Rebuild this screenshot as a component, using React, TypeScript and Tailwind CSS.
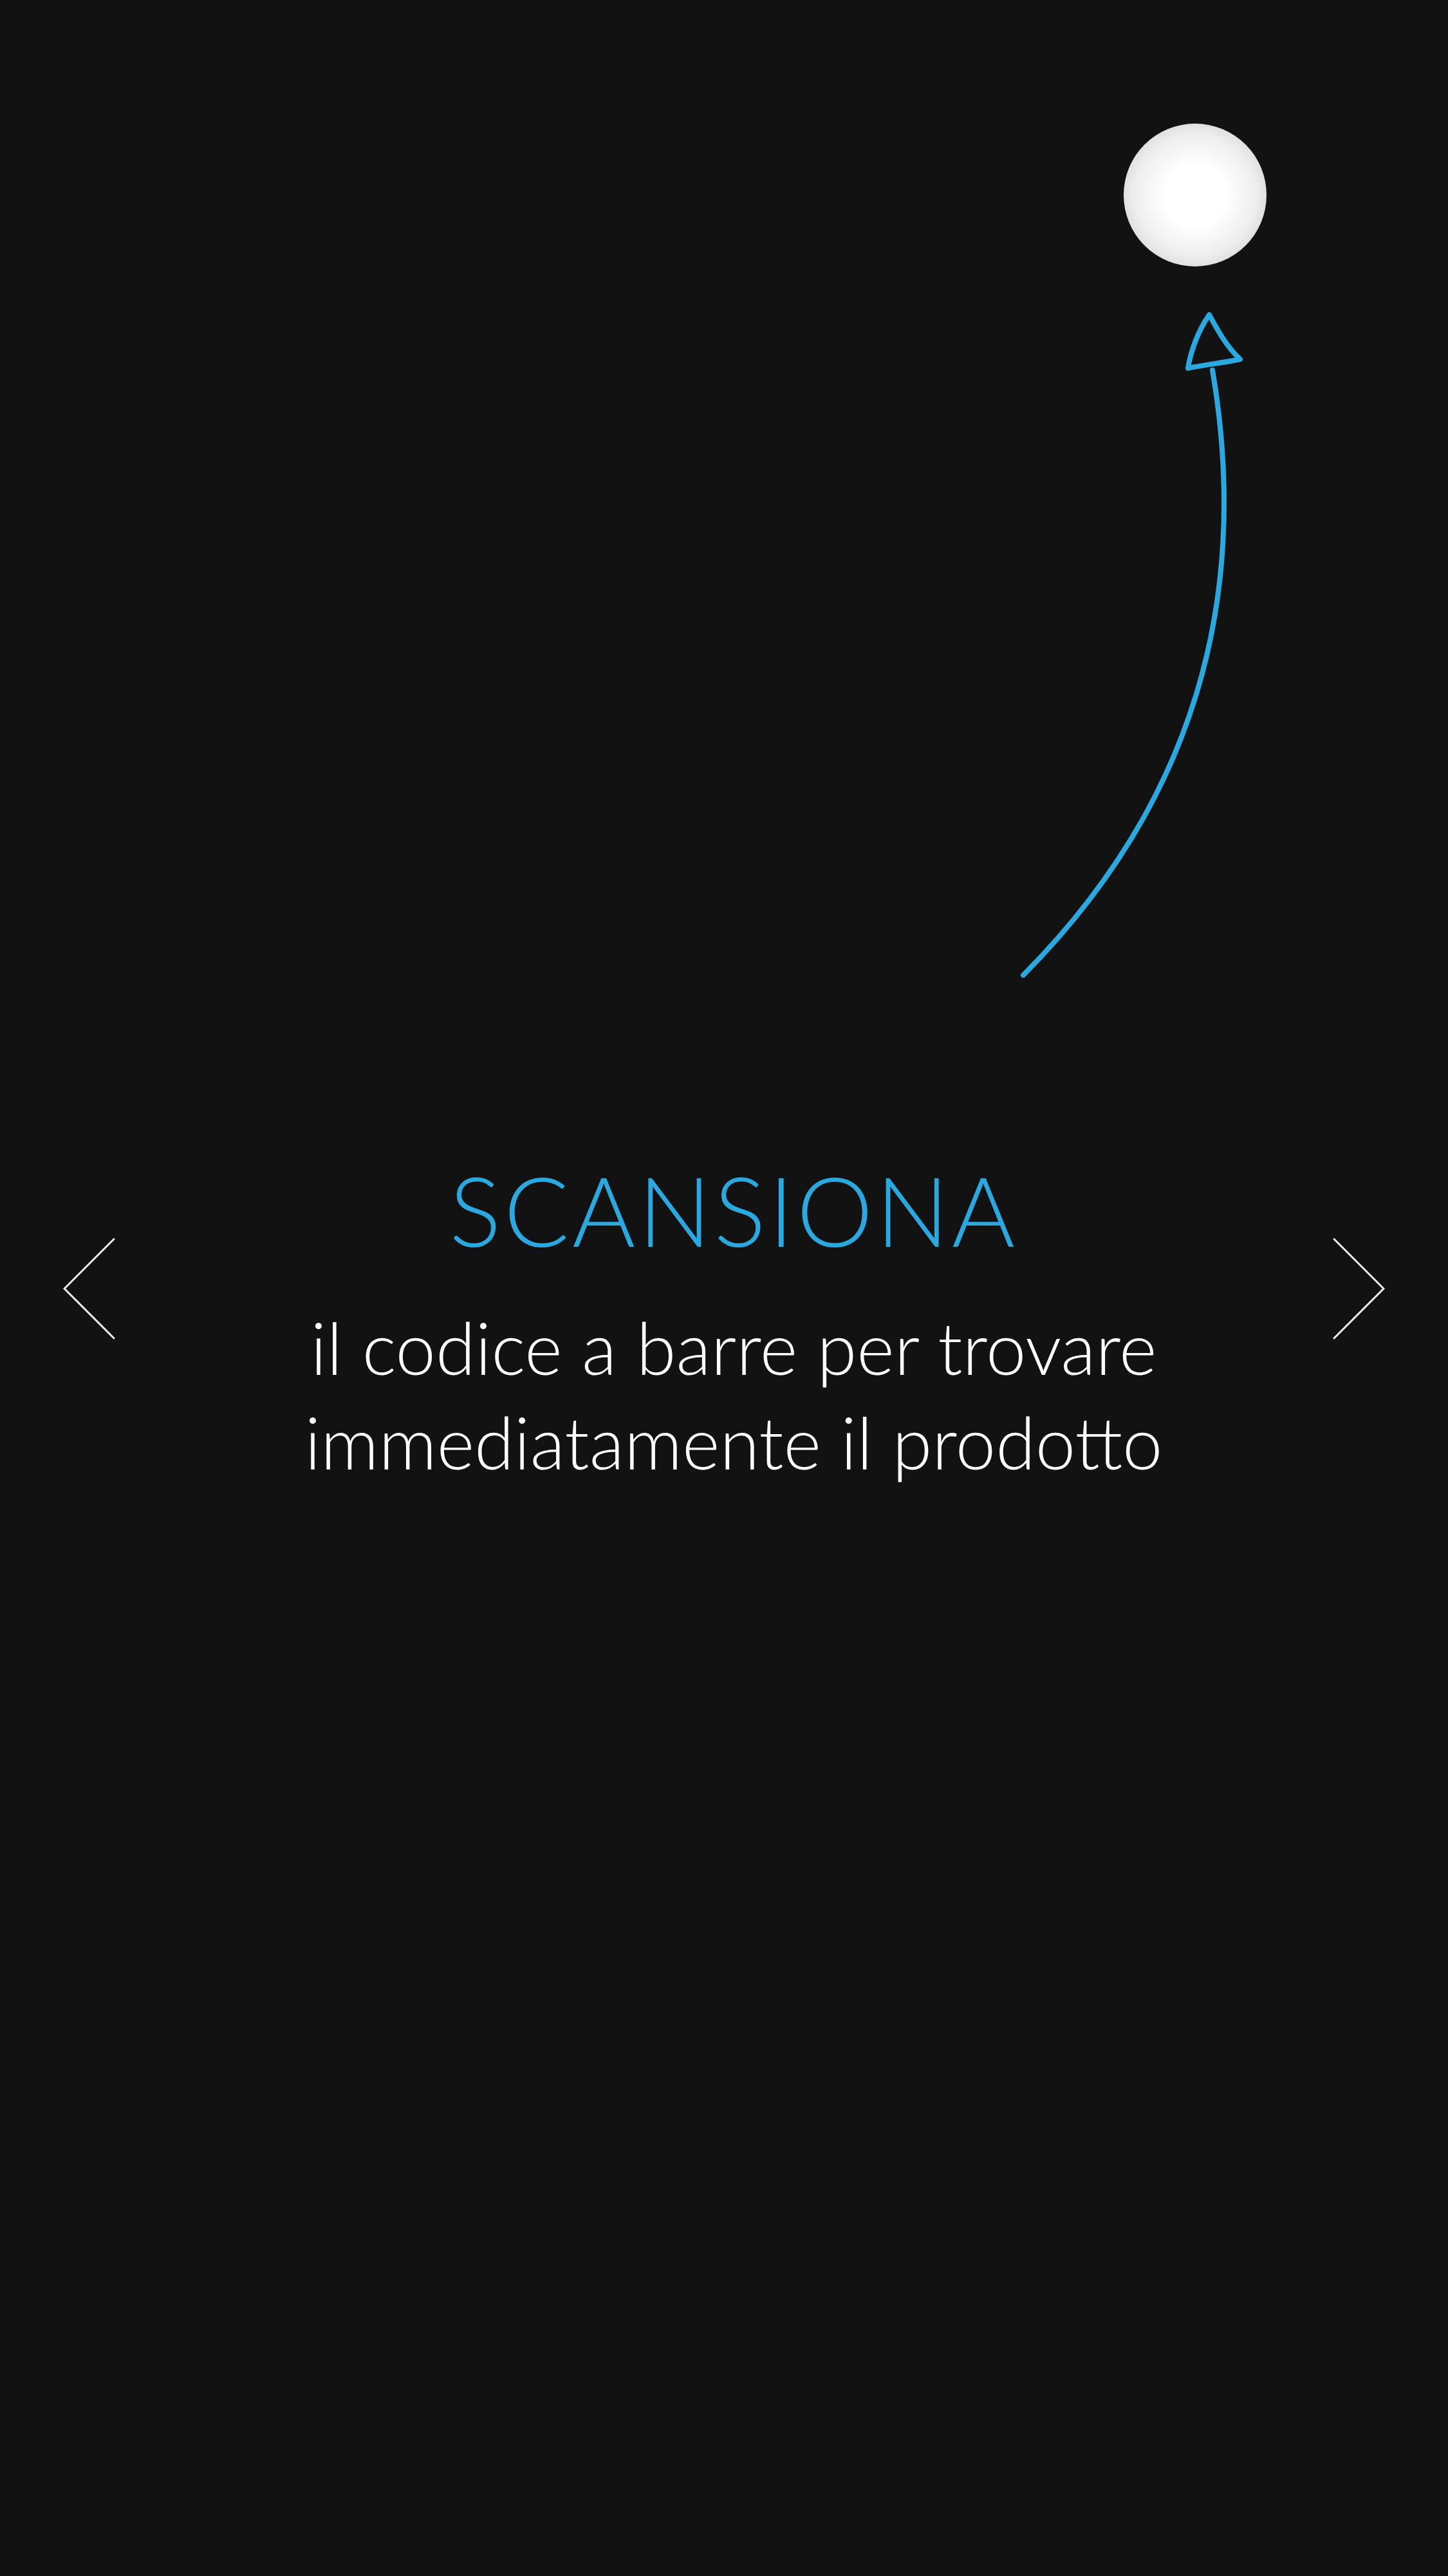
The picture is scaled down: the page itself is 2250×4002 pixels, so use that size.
import React from "react";

function Chevron({ dir }: { dir: "left" | "right" }) {
  const points = dir === "left" ? "79,2 2,79 79,156" : "2,2 79,79 2,156";
  return (
    <svg width="81" height="158" viewBox="0 0 81 158" className="mt-[119px] shrink-0">
      <polyline
        points={points}
        fill="none"
        stroke="#eeeeee"
        strokeWidth="3"
        strokeLinecap="round"
        strokeLinejoin="miter"
      />
    </svg>
  );
}

function ScanArrow() {
  return (
    <svg
      width="360"
      height="1050"
      viewBox="1580 480 360 1050"
      className="shrink-0"
    >
      <path
        d="M1590 1514 Q1902 1200 1902 780 Q1902 680 1884 574"
        fill="none"
        stroke="#2aa9e0"
        strokeWidth="8"
        strokeLinecap="round"
      />
      <path
        d="M1927 557 C1905 562 1870 566 1846 571 C1850 545 1862 512 1879 488 C1890 508 1905 537 1927 557 Z"
        fill="none"
        stroke="#2aa9e0"
        strokeWidth="8"
        strokeLinejoin="round"
      />
    </svg>
  );
}

export default function App() {
  return (
    <div className="flex h-[4002px] w-[2250px] flex-col bg-[#121212] font-['Lato','Open_Sans',sans-serif]">
      <div className="flex justify-end pt-[192px] pr-[282px]">
        <button
          type="button"
          aria-label="Scansiona"
          className="h-[222px] w-[222px] rounded-full bg-[radial-gradient(circle,#ffffff_30%,#eeeeee_60%,#d0d0d0_84%,#b0b0b0_100%)]"
        />
      </div>

      <div className="mt-[67px] flex justify-end pr-[310px]">
        <ScanArrow />
      </div>

      <div className="mt-[273px] flex items-start justify-between px-[98px]">
        <Chevron dir="left" />
        <div className="flex flex-1 flex-col items-center pl-[30px]">
          <h1 className="text-[150px] leading-[150px] font-light tracking-[4.5px] text-[#2aa9e0]">
            SCANSIONA
          </h1>
          <p className="mt-[65px] text-center text-[112px] leading-[147px] font-light text-white">
            il codice a barre per trovare
            <br />
            immediatamente il prodotto
          </p>
        </div>
        <Chevron dir="right" />
      </div>
    </div>
  );
}
